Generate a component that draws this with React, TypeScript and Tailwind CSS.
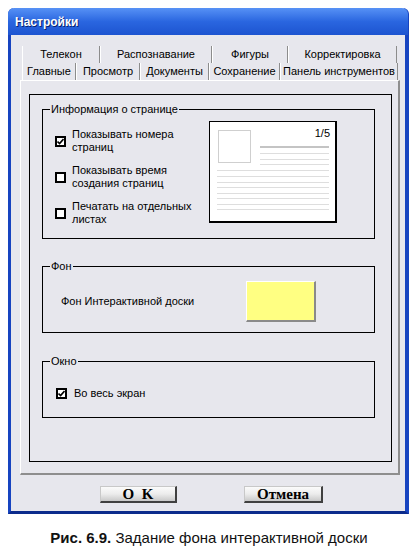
import type { ReactNode } from 'react'

const ROW1 = [
  { label: 'Телекон', w: 78 },
  { label: 'Распознавание', w: 112 },
  { label: 'Фигуры', w: 76 },
  { label: 'Корректировка', w: 109 },
]

const ROW2 = [
  { label: 'Главные', w: 54 },
  { label: 'Просмотр', w: 64 },
  { label: 'Документы', w: 69 },
  { label: 'Сохранение', w: 71 },
  { label: 'Панель инструментов', w: 118 },
]

function Check({ on }: { on?: boolean }) {
  return (
    <span className="grid h-[11px] w-[11px] shrink-0 place-items-center border-2 border-black bg-white">
      {on && (
        <svg width="7" height="7" viewBox="0 0 7 7">
          <path d="M0.5 3.5 L2.6 5.6 L6.5 1" fill="none" stroke="#000" strokeWidth="1.6" />
        </svg>
      )}
    </span>
  )
}

function Group({ title, className, children }: { title: string; className: string; children: ReactNode }) {
  return (
    <div className={`relative ml-[12px] w-[333px] border border-black ${className}`}>
      <span className="absolute left-[7px] top-[-8px] bg-[#e7e7ed] px-[1px] leading-[14px]">{title}</span>
      {children}
    </div>
  )
}

function PagePreview() {
  const right = [153, 159, 164]
  const full = [170, 176, 182, 187, 193, 198, 204, 209]
  return (
    <div className="relative h-[102px] w-[128px] border border-black border-b-2 border-r-2 bg-white">
      <span className="absolute right-[5px] top-[5px] leading-[13px]">1/5</span>
      <svg width="125" height="99" viewBox="209 122 125 99" className="block">
        <rect x="217.5" y="130.5" width="32" height="32" fill="none" stroke="#cfcfcf" />
        <rect x="259" y="146" width="69" height="2" fill="#c4c4c4" />
        {right.map((y) => (
          <rect key={y} x="259" y={y} width="69" height="1" fill="#dedede" />
        ))}
        {full.map((y) => (
          <rect key={y} x="216" y={y} width="112" height="1" fill="#dedede" />
        ))}
      </svg>
    </div>
  )
}

function Btn({ children, w }: { children: ReactNode; w: string }) {
  return (
    <button
      className={`${w} h-[17px] border border-[#c8c8c8] border-b-2 border-r-2 border-b-[#404040] border-r-[#404040] bg-gradient-to-b from-[#fbfbfb] via-[#ececec] to-[#c9c9c9] text-[15px] font-bold leading-[13px] text-black`}
      style={{ fontFamily: '"Liberation Serif", serif' }}
    >
      {children}
    </button>
  )
}

export default function App() {
  return (
    <div
      className="h-[553px] w-[418px] bg-white pt-[8px] text-[11px] text-black"
      style={{ fontFamily: '"Liberation Sans", Arial, sans-serif' }}
    >
      <div className="ml-[8px] w-[401px] rounded-t-[6px] border-b-[3px] border-l-[3px] border-r-[4px] border-[#1744c0] border-b-[#0b2b8c]">
        {/* title bar */}
        <div className="-mx-[3px] flex h-[27px] items-center rounded-t-[6px] bg-gradient-to-b from-[#5791f5] via-[#2a66e0] to-[#1d54d0] pl-[7px]">
          <span className="text-[12px] font-bold text-white [text-shadow:1px_1px_0_#0a2470]">Настройки</span>
        </div>

        {/* client */}
        <div className="h-[476px] bg-[#e7e7ed] pl-[9px] pt-[11px]">
          <div className="flex pl-[2px]">
            {ROW1.map((t) => (
              <div
                key={t.label}
                style={{ width: t.w }}
                className="h-[17px] border-l border-r border-l-white border-r-[#8c8c8c] text-center leading-[17px]"
              >
                {t.label}
              </div>
            ))}
          </div>
          <div className="flex pl-[2px]">
            {ROW2.map((t) => (
              <div
                key={t.label}
                style={{ width: t.w }}
                className="h-[17px] border-l border-r border-l-white border-r-[#8c8c8c] text-center leading-[17px]"
              >
                {t.label}
              </div>
            ))}
          </div>

          {/* tab panel */}
          <div className="h-[395px] w-[380px] border-l border-t border-white border-b-2 border-r-2 border-b-[#8e8e8e] border-r-[#8e8e8e] pl-[8px] pt-[13px]">
            <div className="h-[368px] w-[363px] border border-black pt-[14px]">
              <Group title="Информация о странице" className="h-[130px]">
                <div className="flex">
                  <div className="flex flex-col gap-[10px] pl-[12px] pt-[18px]">
                    {[
                      ['Показывать номера', 'страниц', true],
                      ['Показывать время', 'создания страниц', false],
                      ['Печатать на отдельных', 'листах', false],
                    ].map(([a, b, on]) => (
                      <div key={a as string} className="flex items-center gap-[6px]">
                        <Check on={on as boolean} />
                        <div className="leading-[13px]">
                          <div>{a}</div>
                          <div>{b}</div>
                        </div>
                      </div>
                    ))}
                  </div>
                  <div className="ml-auto mr-[37px] mt-[11px]">
                    <PagePreview />
                  </div>
                </div>
              </Group>

              <Group title="Фон" className="mt-[27px] h-[67px]">
                <div className="flex items-center pl-[18px] pt-[14px]">
                  <span className="w-[185px]">Фон Интерактивной доски</span>
                  <div className="h-[41px] w-[70px] border border-white border-b-2 border-r-2 border-b-[#8a8a8a] border-r-[#8a8a8a] bg-[#ffff82]" />
                </div>
              </Group>

              <Group title="Окно" className="mt-[28px] h-[57px]">
                <div className="flex items-center gap-[7px] pl-[13px] pt-[25px]">
                  <Check on />
                  <span className="leading-[13px]">Во весь экран</span>
                </div>
              </Group>
            </div>
          </div>

          {/* buttons */}
          <div className="mt-[11px] flex pl-[80px]">
            <Btn w="w-[77px]">O&nbsp;&nbsp;K</Btn>
            <div className="w-[67px]" />
            <Btn w="w-[79px]">Отмена</Btn>
          </div>
        </div>
      </div>

      <p className="mt-[15px] text-center text-[15px] leading-[17px] text-[#111]">
        <b>Рис. 6.9.</b> Задание фона интерактивной доски
      </p>
    </div>
  )
}
